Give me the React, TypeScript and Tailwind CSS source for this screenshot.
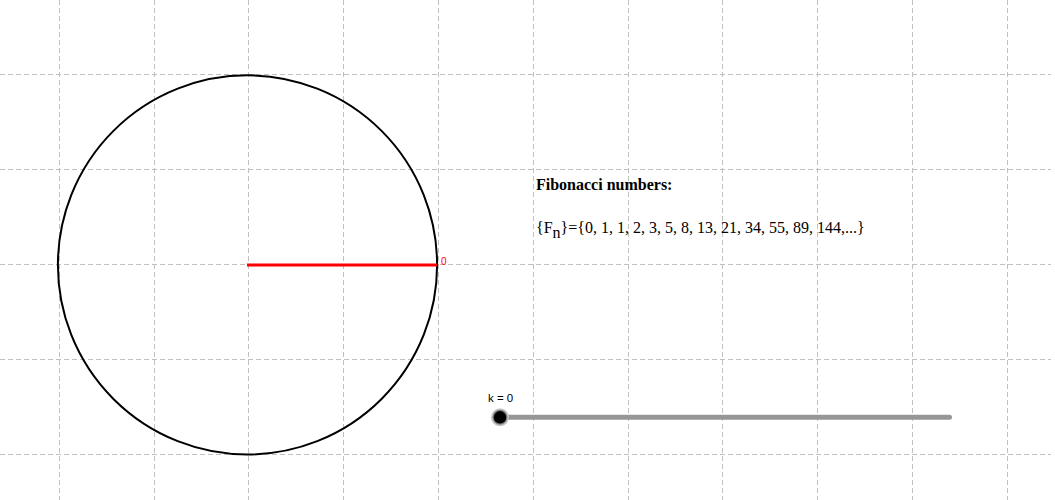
import React from "react";

const W = 1055;
const H = 500;
const step = 94.8;
const x0 = 58.7;
const y0 = 75.3;

export default function App() {
  const xs: number[] = [];
  for (let x = x0; x < W; x += step) xs.push(x);
  const ys: number[] = [];
  for (let y = y0; y < H; y += step) ys.push(y);

  return (
    <div className="relative w-[1055px] h-[500px] bg-white overflow-hidden">
      <svg width={W} height={H} className="block" xmlns="http://www.w3.org/2000/svg">
        <g stroke="#c0c0c0" strokeWidth={1} strokeDasharray="5 3">
          {xs.map((x) => (
            <line key={"v" + x} x1={Math.round(x) + 0.5} y1={0} x2={Math.round(x) + 0.5} y2={H} />
          ))}
          {ys.map((y) => (
            <line key={"h" + y} x1={0} y1={Math.round(y) - 0.5} x2={1051} y2={Math.round(y) - 0.5} />
          ))}
        </g>
        <circle cx={247.5} cy={264.9} r={189.6} fill="none" stroke="#000" strokeWidth={2} />
        <line x1={247} y1={264.9} x2={437} y2={264.9} stroke="#ff0000" strokeWidth={3} />
        <text x={441} y={264.5} fill="#ff0000" fontSize={10} fontFamily="'Liberation Sans', Arial, sans-serif">
          0
        </text>

        <text x={536} y={189.5} fontSize={16} fontWeight="bold" fontFamily="'Liberation Serif', 'Times New Roman', serif" fill="#000">
          Fibonacci numbers:
        </text>
        <text x={536} y={233} fontSize={16} fontFamily="'Liberation Serif', 'Times New Roman', serif" fill="#000">
          {"{F"}
          <tspan dy={5}>n</tspan>
          <tspan dy={-5}>{"}={0, 1, 1, 2, 3, 5, 8, 13, 21, 34, 55, 89, 144,...}"}</tspan>
        </text>

        <text x={488} y={402} fontSize={11.5} fontFamily="'Liberation Sans', Arial, sans-serif" fill="#000">
          k = 0
        </text>
        <line x1={500} y1={417.3} x2={949.5} y2={417.3} stroke="#969696" strokeWidth={5} strokeLinecap="round" />
        <circle cx={500} cy={417.3} r={9} fill="#c8c8c8" />
        <circle cx={500} cy={417.3} r={7.5} fill="#7a7a7a" />
        <circle cx={500} cy={417.3} r={6.2} fill="#000" />
      </svg>
    </div>
  );
}
